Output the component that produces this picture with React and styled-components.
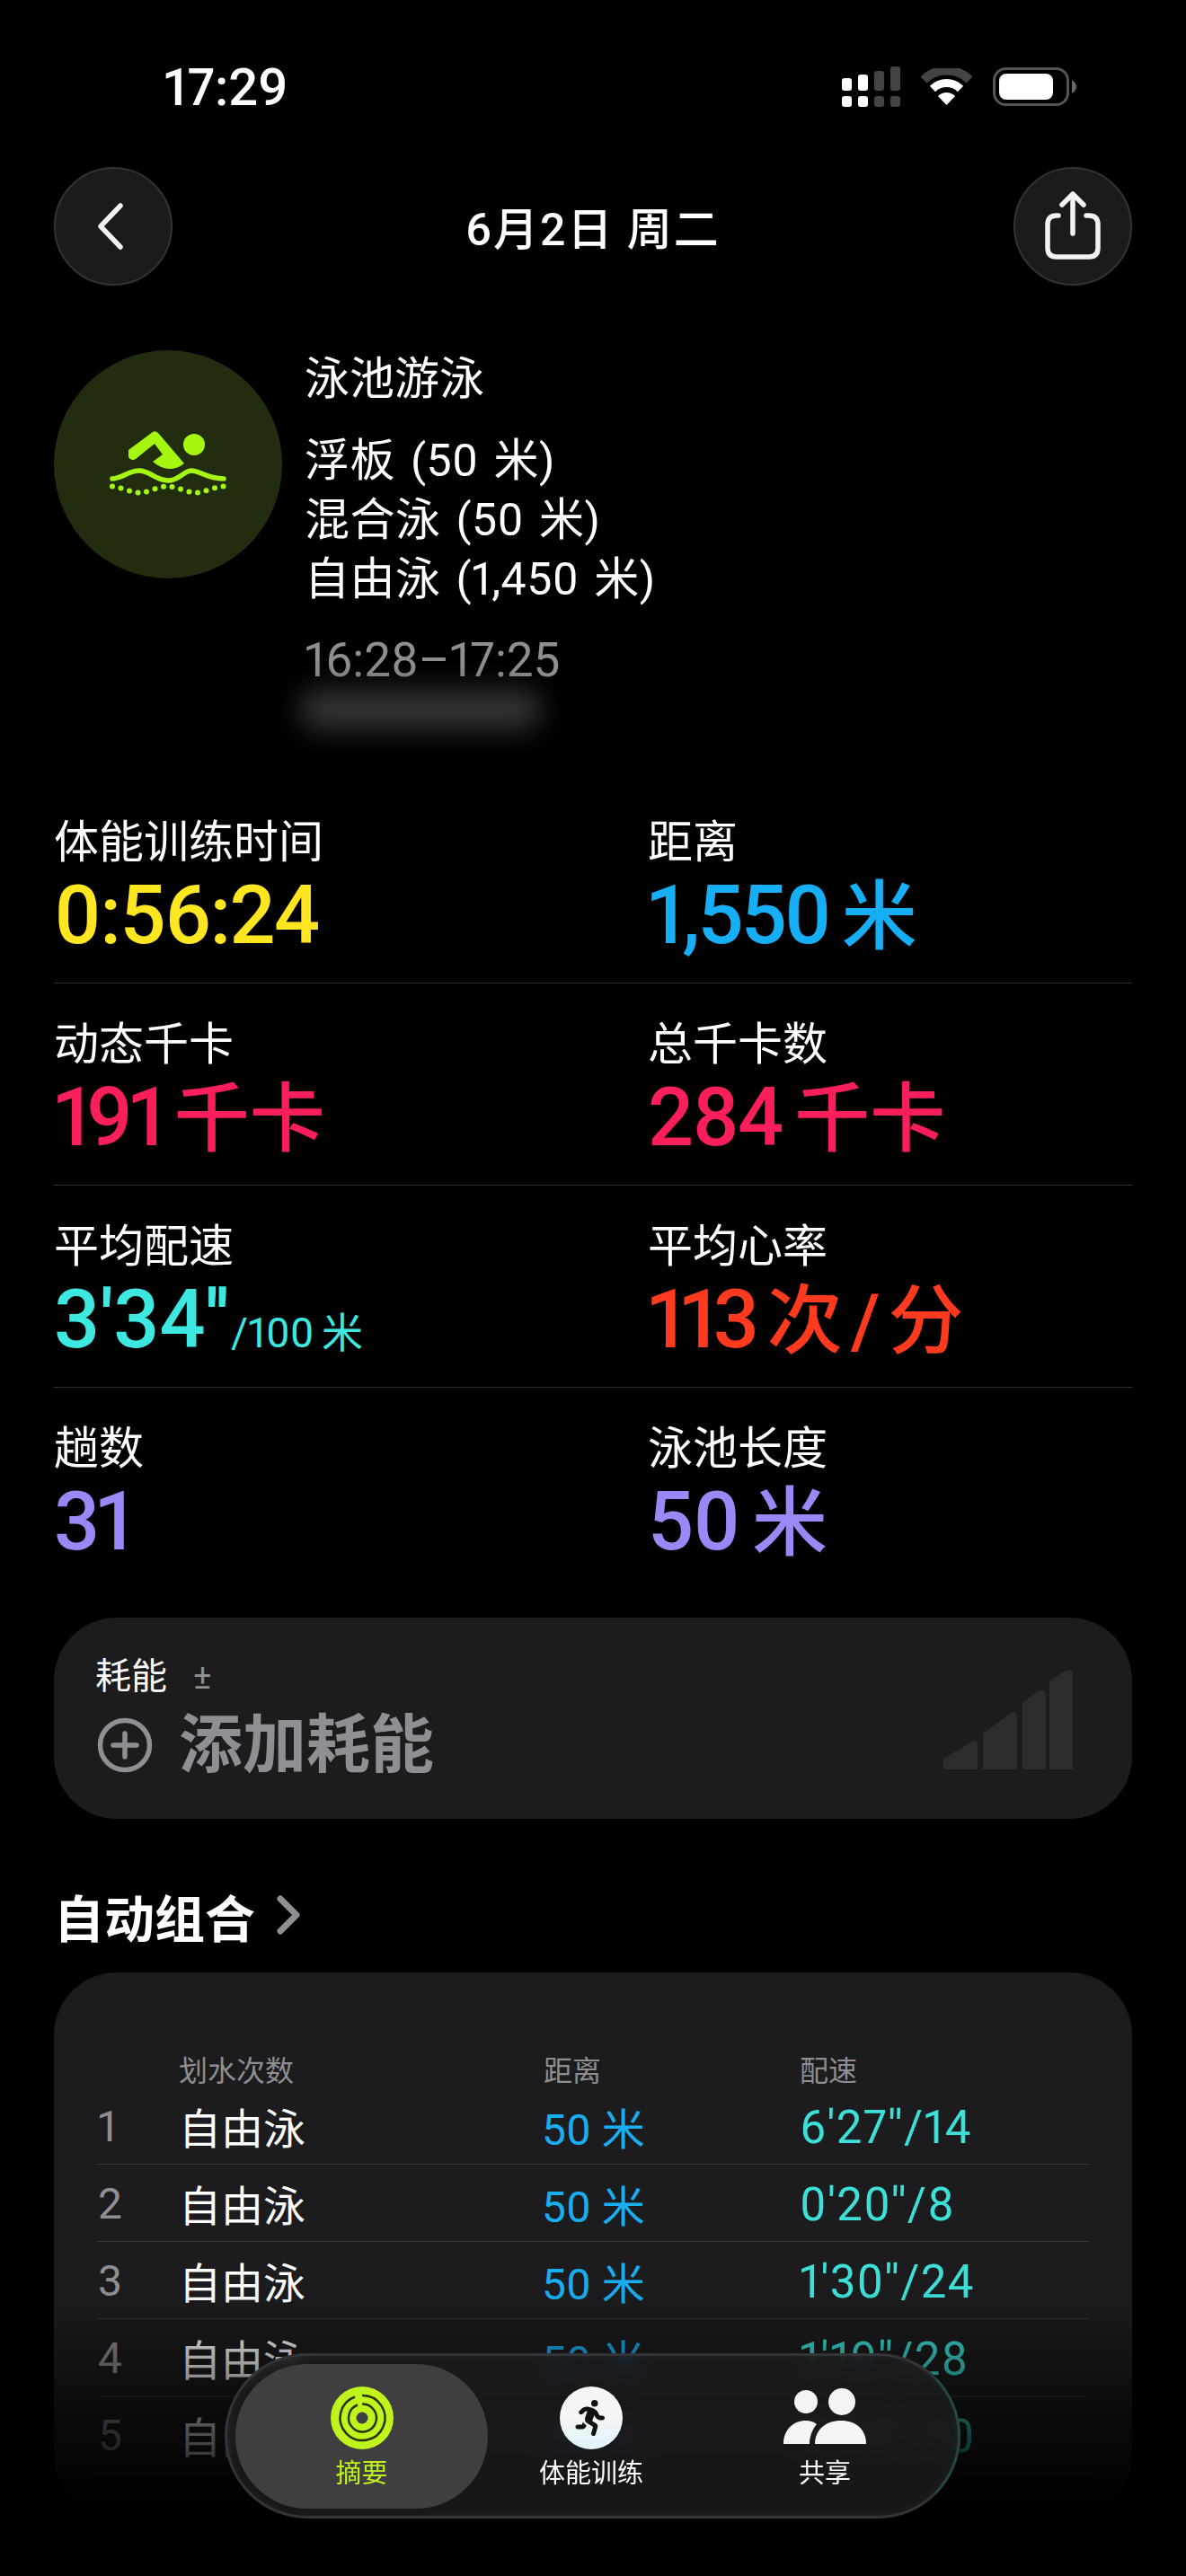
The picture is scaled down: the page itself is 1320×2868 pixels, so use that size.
import React from "react";
import styled, { createGlobalStyle } from "styled-components";
import { FaPersonRunning } from "react-icons/fa6";

const CJK = '"Noto Sans CJK SC", sans-serif';
const FONT = `Roboto, ${CJK}`;

const Global = createGlobalStyle`
  html, body { margin: 0; background: #000; }
  body { font-family: ${FONT}; color: #fff; font-variant-numeric: proportional-nums; }
  * { box-sizing: border-box; }
`;

const Page = styled.div`
  position: relative;
  width: 1320px;
  height: 2868px;
  overflow: hidden;
  background: #000;
`;

const StatusBar = styled.div`
  height: 186px;
  position: relative;
  display: flex;
  justify-content: space-between;
  padding: 70px 122px 0 182px;
`;
const Clock = styled.div`
  font-size: 58px;
  line-height: 54px;
  font-weight: 500;
  letter-spacing: 0;
`;
const StatusIcons = styled.div`
  display: flex;
  align-items: flex-start;
  gap: 23px;
  margin-top: 4px;
`;
const SignalIcon = styled.svg`width: 65px; height: 45px; display: block;`;
const WifiIcon = styled.svg`width: 57px; height: 41px; display: block; margin-top: 2px;`;
const BatteryIcon = styled.svg`width: 93px; height: 43px; display: block; margin-top: 1px;`;

const Content = styled.div`
  padding: 0 60px;
`;
const NavRow = styled.div`
  display: flex;
  align-items: center;
  justify-content: space-between;
  height: 132px;
`;
const RoundButton = styled.div`
  width: 132px;
  height: 132px;
  border-radius: 50%;
  background: #1b1b1b;
  border: 2px solid #333;
  display: flex;
  align-items: center;
  justify-content: center;
`;
const NavTitle = styled.div`
  font-size: 50px;
  font-weight: 500;
  letter-spacing: 2px;
  margin-top: -3px;
`;

const Hero = styled.div`
  display: flex;
  gap: 25px;
  padding-top: 71px;
  height: 552px;
`;
const HeroBadge = styled.div`
  width: 254px;
  height: 254px;
  margin-top: 1px;
  border-radius: 50%;
  background: #222d10;
  flex: none;
  display: flex;
  align-items: center;
  justify-content: center;
`;
const HeroText = styled.div`
  display: flex;
  flex-direction: column;
  font-size: 50px;
  line-height: 66px;
  font-weight: 400;
`;
const Lines = styled.div`
  margin-top: 25px;
  word-spacing: 4px;
  letter-spacing: .5px;
`;
const TimeRange = styled.div`
  margin-top: 24px;
  color: #8e8e93;
  font-size: 53px;
`;
const Smudge = styled.div`
  width: 270px;
  height: 46px;
  margin: -1px 0 0 -6px;
  background: #333;
  border-radius: 24px;
  filter: blur(15px);
`;

const Metrics = styled.div`
  display: flex;
  flex-direction: column;
`;
const MetricRow = styled.div`
  display: grid;
  grid-template-columns: 661px 1fr;
  height: 225px;
  padding-top: 38px;
  border-bottom: 1px solid ${p => (p.$last ? "transparent" : "#2c2c2e")};
`;
const Metric = styled.div`
  display: flex;
  flex-direction: column;
`;
const MetricLabel = styled.div`
  font-size: 50px;
  line-height: 60px;
`;
const MetricValue = styled.div`
  font-size: 90px;
  line-height: 104px;
  font-weight: 500;
  letter-spacing: ${p => p.$track}px;
  color: ${p => p.$color};
  white-space: nowrap;
`;
const MetricUnit = styled.span`
  font-size: 84px;
  font-weight: 500;
  letter-spacing: 0;
  word-spacing: -12px;
  margin-left: 14px;
`;
const MetricSub = styled.span`
  font-size: 46px;
  font-weight: 400;
  letter-spacing: 0;
  margin-left: 2px;
  word-spacing: -3px;
`;

const EnergyCard = styled.div`
  margin-top: 31px;
  height: 224px;
  border-radius: 70px;
  background: #1c1c1e;
  padding: 40px 44px 0 46px;
  position: relative;
  display: flex;
  justify-content: space-between;
`;
const EnergyText = styled.div`
  display: flex;
  flex-direction: column;
`;
const EnergyLabel = styled.div`
  font-size: 40px;
  line-height: 52px;
  display: flex;
  gap: 29px;
  align-items: center;
`;
const PlusMinus = styled.span`
  font-size: 38px;
  color: #8e8e93;
`;
const AddRow = styled.div`
  display: flex;
  align-items: center;
  gap: 29px;
  margin-top: 12px;
  margin-left: 2px;
  font-size: 71px;
  line-height: 76px;
  font-weight: 700;
  color: #8e8e93;
`;
const BarsIcon = styled.svg`width: 148px; height: 112px; display: block; margin-top: 17px; margin-right: 18px;`;

const SectionHead = styled.div`
  margin-top: 73px;
  height: 68px;
  display: flex;
  align-items: center;
  gap: 24px;
  font-size: 56px;
  font-weight: 700;
  padding-left: 0;
`;

const TableCard = styled.div`
  position: relative;
  margin-top: 30px;
  height: 602px;
  border-radius: 70px;
  background: #1c1c1e;
  overflow: hidden;
  padding: 84px 48px 0;
`;
const Fade = styled.div`
  position: absolute;
  left: 0;
  right: 0;
  bottom: 0;
  height: 250px;
  background: linear-gradient(to bottom, rgba(0,0,0,0), rgba(0,0,0,.62) 55%, #000 100%);
`;
const TableRow = styled.div`
  display: grid;
  grid-template-columns: 91px 406px 285px 1fr;
  align-items: center;
  height: ${p => (p.$header ? "44px" : "86px")};
  border-bottom: 1px solid ${p => (p.$header ? "transparent" : "#38383a")};
  font-size: ${p => (p.$header ? "32px" : "48px")};
`;
const HeadCell = styled.div`
  color: #8e8e93;
`;
const RowIndex = styled.div`
  color: #8e8e93;
  padding-left: 1px;
  padding-top: 2px;
`;
const Stroke = styled.div`
  font-size: 47px;
`;
const Dist = styled.div`
  color: #19aef0;
  margin-left: -2px;
`;
const Pace = styled.div`
  color: #3de0d8;
  font-size: 51px;
  padding-top: 3px;
  letter-spacing: 1.3px;
`;

const TabBar = styled.div`
  position: absolute;
  left: 250px;
  top: 2620px;
  width: 819px;
  height: 184px;
  border-radius: 92px;
  background: rgba(27, 27, 29, .86);
  backdrop-filter: blur(10px);
  border: 3px solid #333437;
  border-right-color: #23474a;
  box-shadow: inset 0 0 10px rgba(255,255,255,.05);
  display: grid;
  grid-template-columns: 281px 230px 290px;
  padding: 9px 0 0 9px;
`;
const Tab = styled.div`
  height: 161px;
  border-radius: 80px;
  background: ${p => (p.$active ? "#3f3f41" : "transparent")};
  color: ${p => (p.$active ? "#bff41c" : "#fff")};
  display: flex;
  flex-direction: column;
  align-items: center;
  padding-top: 25px;
  font-size: 29px;
  line-height: 36px;
  gap: 9px;
`;
const TabGlyph = styled.svg`width: 94px; height: 70px; display: block;`;
const RunnerDisc = styled.div`
  width: 70px;
  height: 70px;
  border-radius: 50%;
  background: linear-gradient(to bottom, #f5f5f5 45%, #dff4fb 100%);
  color: #111;
  display: flex;
  align-items: center;
  justify-content: center;
  font-size: 40px;
`;

const metrics = [
  [
    { label: "体能训练时间", color: "#ffe620", value: "0:56:24", track: -1.6 },
    { label: "距离", color: "#16aef5", value: "1,550", unit: "米", track: -3 },
  ],
  [
    { label: "动态千卡", color: "#fa1e5a", value: "191", unit: "千卡", track: -5 },
    { label: "总千卡数", color: "#fa1e5a", value: "284", unit: "千卡", track: -2 },
  ],
  [
    { label: "平均配速", color: "#3de8e0", value: "3'34''", sub: "/100 米", track: 0 },
    { label: "平均心率", color: "#ff3a1e", value: "113", unit: "次 / 分", track: -5 },
  ],
  [
    { label: "趟数", color: "#9b87f5", value: "31", track: -4 },
    { label: "泳池长度", color: "#9b87f5", value: "50", unit: "米", track: -1 },
  ],
];

const laps = [
  ["1", "6'27''/14"],
  ["2", "0'20''/8"],
  ["3", "1'30''/24"],
  ["4", "1'19''/28"],
  ["5", "0'24''/10"],
];

const dots = Array.from({ length: 14 }, (_, i) => {
  const x = 4 + i * 9.5;
  const y = 68 + 3.5 * Math.sin((i - 1.5) * 0.95);
  return [x, y];
});

function SwimIcon() {
  return (
    <svg width="132" height="80" viewBox="0 0 132 80" fill="none">
      <circle cx="95" cy="18" r="12" fill="#a6f70f" />
      <path d="M22 24 L49 4 Q52 2 55 5 L84 39 Q77 45 67 45 Q57 44 49 37 L60 29 L51 17 L30 34 Q25 37 22 32 Z" fill="#a6f70f" />
      <path d="M4 56 C16 55 22 47 34 47 C46 47 52 58 66 58 C78 58 84 47 92 47 C102 47 108 56 128 56" stroke="#a6f70f" strokeWidth="5.5" strokeLinecap="round" />
      {dots.map(([x, y], i) => (
        <circle key={i} cx={x} cy={y} r="3" fill="#a6f70f" />
      ))}
    </svg>
  );
}

export default function App() {
  return (
    <Page>
      <Global />
      <StatusBar>
        <Clock>17:29</Clock>
        <StatusIcons>
          <SignalIcon viewBox="0 0 65 45">
            {[14, 18, 22, 27].map((h, i) => (
              <rect key={i} x={i * 18} y={27 - h} width="11" height={h} rx="3" fill={i < 2 ? "#fff" : "#444"} />
            ))}
            {[0, 1, 2, 3].map(i => (
              <rect key={i} x={i * 18} y="33" width="11" height="12" rx="3" fill={i < 2 ? "#fff" : "#444"} />
            ))}
          </SignalIcon>
          <WifiIcon viewBox="0 0 57 41" fill="none">
            <path d="M3 13 A36 36 0 0 1 54 13" stroke="#444" strokeWidth="10" />
            <path d="M13 23 A22 22 0 0 1 44 23" stroke="#fff" strokeWidth="9" />
            <path d="M28.5 41 L19 31 A13.5 13.5 0 0 1 38 31 Z" fill="#fff" />
          </WifiIcon>
          <BatteryIcon viewBox="0 0 93 43" fill="none">
            <rect x="1.5" y="1.5" width="82" height="40" rx="13" stroke="#555" strokeWidth="3" />
            <rect x="7" y="7" width="60" height="29" rx="8" fill="#fff" />
            <path d="M88 14 Q93 17 93 21.5 Q93 26 88 29 Z" fill="#666" />
          </BatteryIcon>
        </StatusIcons>
      </StatusBar>
      <Content>
        <NavRow>
          <RoundButton>
            <svg width="40" height="60" viewBox="0 0 40 60" fill="none">
              <path d="M30 7 L8 30 L30 53" stroke="#f2f2f2" strokeWidth="5.5" strokeLinecap="round" strokeLinejoin="round" transform="translate(-2 0)" />
            </svg>
          </RoundButton>
          <NavTitle>6月2日 周二</NavTitle>
          <RoundButton>
            <svg width="64" height="78" viewBox="0 0 64 78" fill="none">
              <path d="M16 27 H14 Q4 27 4 37 V63 Q4 73 14 73 H50 Q60 73 60 63 V37 Q60 27 50 27 H47" stroke="#f2f2f2" strokeWidth="5.5" strokeLinecap="round" />
              <path d="M32 47 V3 M20 15 L32 3 L44 15" stroke="#f2f2f2" strokeWidth="5.5" strokeLinecap="round" strokeLinejoin="round" />
            </svg>
          </RoundButton>
        </NavRow>
        <Hero>
          <HeroBadge>
            <SwimIcon />
          </HeroBadge>
          <HeroText>
            <div>泳池游泳</div>
            <Lines>
              <div>浮板 (50 米)</div>
              <div>混合泳 (50 米)</div>
              <div>自由泳 (1,450 米)</div>
            </Lines>
            <TimeRange>16:28–17:25</TimeRange>
            <Smudge />
          </HeroText>
        </Hero>
        <Metrics>
          {metrics.map((row, i) => (
            <MetricRow key={i} $last={i === metrics.length - 1}>
              {row.map(m => (
                <Metric key={m.label}>
                  <MetricLabel>{m.label}</MetricLabel>
                  <MetricValue $color={m.color} $track={m.track}>
                    {m.value}
                    {m.unit && <MetricUnit>{m.unit}</MetricUnit>}
                    {m.sub && <MetricSub>{m.sub}</MetricSub>}
                  </MetricValue>
                </Metric>
              ))}
            </MetricRow>
          ))}
        </Metrics>
        <EnergyCard>
          <EnergyText>
            <EnergyLabel>
              耗能
              <PlusMinus>±</PlusMinus>
            </EnergyLabel>
            <AddRow>
              <svg width="62" height="62" viewBox="0 0 62 62" fill="none">
                <circle cx="31" cy="31" r="27.5" stroke="#8e8e93" strokeWidth="5.5" />
                <path d="M31 18 V44 M18 31 H44" stroke="#8e8e93" strokeWidth="5.5" strokeLinecap="round" />
              </svg>
              添加耗能
            </AddRow>
          </EnergyText>
          <BarsIcon viewBox="0 0 148 112" fill="#2c2c2e">
            <path d="M0 112 V100 L30 82 Q38 76 38 86 V112 Z" />
            <path d="M44 112 V72 L74 50 Q82 44 82 54 V112 Z" />
            <path d="M88 112 V38 L104 26 Q114 20 114 30 V112 Z" />
            <path d="M118 112 V14 L134 3 Q144 -3 144 8 V112 Z" />
          </BarsIcon>
        </EnergyCard>
        <SectionHead>
          自动组合
          <svg width="26" height="44" viewBox="0 0 26 44" fill="none">
            <path d="M4 4 L22 22 L4 40" stroke="#8e8e93" strokeWidth="7" strokeLinecap="round" strokeLinejoin="round" />
          </svg>
        </SectionHead>
        <TableCard>
          <TableRow $header>
            <HeadCell />
            <HeadCell>划水次数</HeadCell>
            <HeadCell>距离</HeadCell>
            <HeadCell>配速</HeadCell>
          </TableRow>
          {laps.map(([n, pace]) => (
            <TableRow key={n}>
              <RowIndex>{n}</RowIndex>
              <Stroke>自由泳</Stroke>
              <Dist>50 米</Dist>
              <Pace>{pace}</Pace>
            </TableRow>
          ))}
          <Fade />
        </TableCard>
      </Content>
      <TabBar>
        <Tab $active>
          <TabGlyph viewBox="0 0 94 70" fill="none">
            <circle cx="47" cy="35" r="35" fill="#bff41c" />
            <path d="M47 10 A25 25 0 1 1 39 11.5" stroke="#2a3308" strokeWidth="2.5" />
            <path d="M47 19.5 A15.5 15.5 0 1 1 42 20.5" stroke="#2a3308" strokeWidth="2.5" />
            <circle cx="47" cy="35" r="6.5" fill="#3f3f41" />
          </TabGlyph>
          摘要
        </Tab>
        <Tab>
          <RunnerDisc>
            <FaPersonRunning />
          </RunnerDisc>
          体能训练
        </Tab>
        <Tab>
          <TabGlyph viewBox="0 0 94 70" fill="#f4f4f4">
            <circle cx="26" cy="17" r="13" />
            <circle cx="66" cy="17" r="15" />
            <path d="M1 64 C1 48 12 38 26 38 C31 38 34 39 38 42 C33 48 30 56 30 64 Z" />
            <path d="M36 64 C36 48 48 38 65 38 C82 38 93 48 93 64 Z" />
          </TabGlyph>
          共享
        </Tab>
      </TabBar>
    </Page>
  );
}
